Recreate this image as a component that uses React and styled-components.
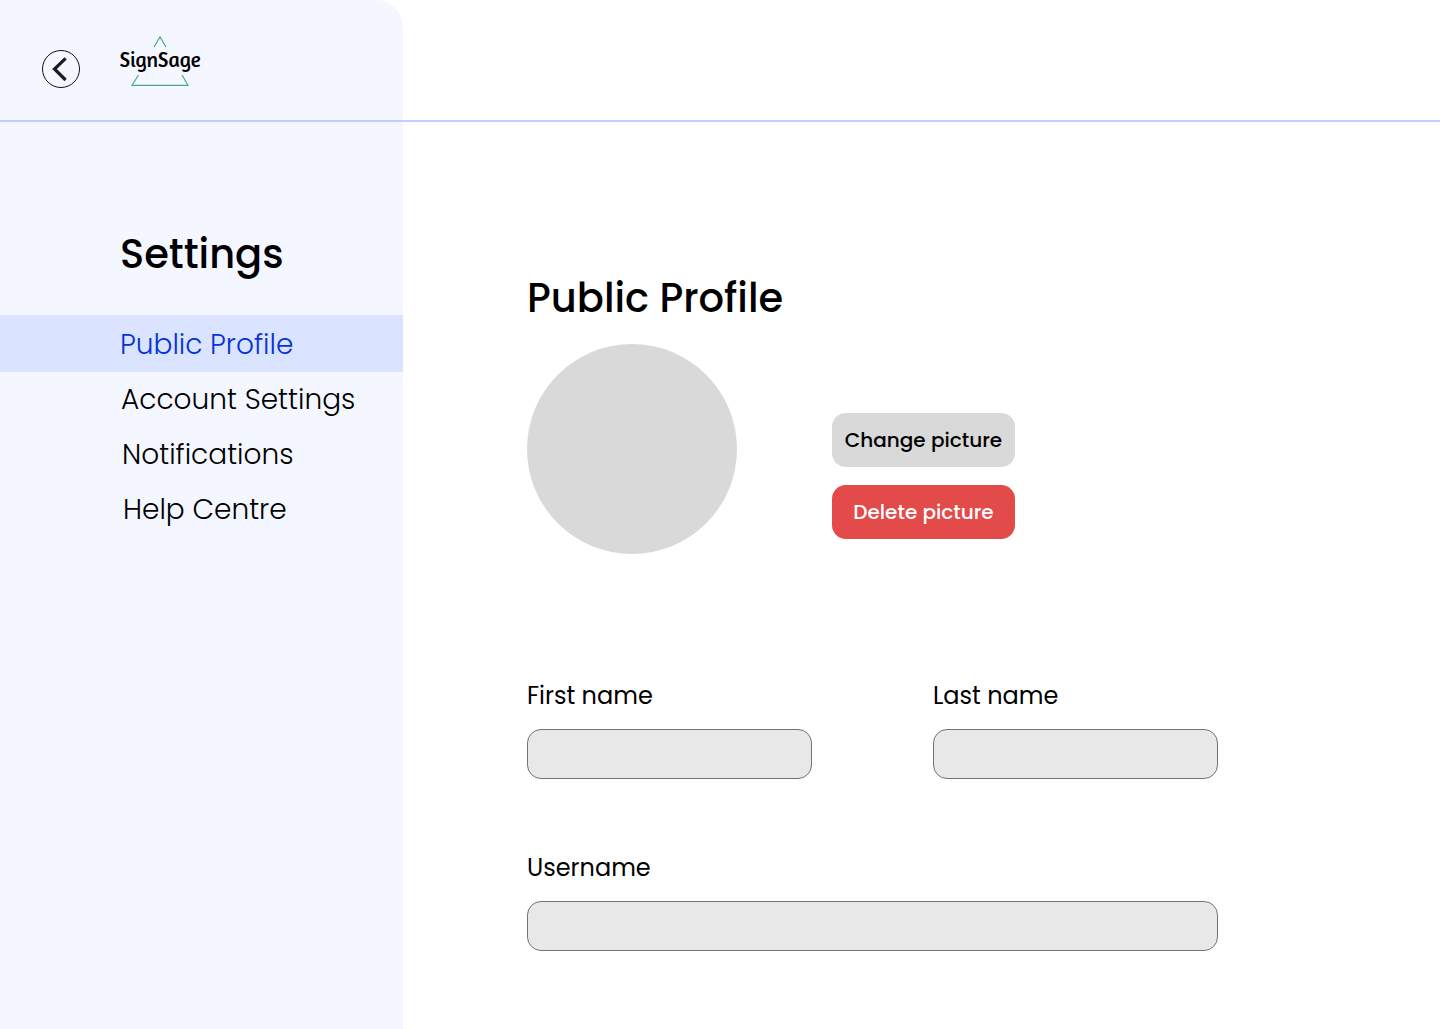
import React from "react";
import styled, { createGlobalStyle } from "styled-components";

const GlobalStyle = createGlobalStyle`
  *, *::before, *::after { box-sizing: border-box; }
  body {
    margin: 0;
    background: #fff;
    color: #000;
    font-family: Poppins, Inter, "Open Sans", sans-serif;
  }
`;

const Page = styled.div`
  display: grid;
  grid-template-columns: 403px 1fr;
  min-height: 1029px;
`;

const Sidebar = styled.aside`
  background: #f4f7ff;
  border-top-right-radius: 27px;
`;

const TopBar = styled.div`
  display: flex;
  align-items: flex-start;
  height: 122px;
  border-bottom: 2px solid #bfcfff;
`;

const BackButton = styled.button`
  display: block;
  width: 38px;
  height: 38px;
  margin: 50px 0 0 42px;
  padding: 0;
  border: 0;
  background: none;
`;

const Logo = styled.svg`
  display: block;
  width: 88px;
  height: 54px;
  margin: 34px 0 0 36px;
  overflow: visible;
`;

const LogoText = styled.text`
  font-family: Amaranth, "Open Sans", sans-serif;
  font-size: 21px;
  font-weight: 400;
`;

const Title = styled.h1`
  margin: ${(p) => p.$margin};
  font-size: 40px;
  line-height: 60px;
  font-weight: 500;
  white-space: nowrap;
`;

const NavItem = styled.a`
  display: block;
  height: ${(p) => (p.$active ? 57 : 55)}px;
  line-height: ${(p) => (p.$active ? 59 : 55)}px;
  padding-left: ${(p) => p.$indent}px;
  background: ${(p) => (p.$active ? "#dae3ff" : "transparent")};
  color: ${(p) => (p.$active ? "#0433d9" : "#000")};
  font-size: 28px;
  font-weight: 300;
  white-space: nowrap;
`;

const Content = styled.section`
  width: 815px;
  padding-left: 124px;
`;

const PictureRow = styled.div`
  display: flex;
  align-items: center;
  gap: 95px;
  margin-top: 16px;
`;

const Avatar = styled.div`
  width: 210px;
  height: 210px;
  border-radius: 50%;
  background: #d9d9d9;
`;

const Actions = styled.div`
  display: grid;
  gap: 18px;
  margin-top: 54px;
  align-self: flex-start;
  padding-top: 15px;
`;

const Button = styled.button`
  width: 183px;
  height: 54px;
  padding: 0;
  border: 0;
  border-radius: 14px;
  background: ${(p) => (p.$danger ? "#e34a4a" : "#d9d9d9")};
  color: ${(p) => (p.$danger ? "#fff" : "#000")};
  font: inherit;
  font-size: 20px;
  font-weight: 500;
  white-space: nowrap;
`;

const Form = styled.form`
  display: grid;
  grid-template-columns: 285px 285px;
  column-gap: 121px;
  row-gap: 71px;
  margin-top: 124px;
`;

const Field = styled.label`
  grid-column: ${(p) => (p.$wide ? "1 / -1" : "auto")};
  display: flex;
  flex-direction: column;
  gap: 16px;
  font-size: 24px;
  line-height: 35px;
`;

const Input = styled.input`
  width: 100%;
  height: 50px;
  padding: 0 14px;
  border: 1px solid #737373;
  border-radius: 14px;
  background: #e8e8e8;
  font: inherit;
`;

export default function App() {
  return (
    <>
      <GlobalStyle />
      <Page>
        <Sidebar>
          <TopBar>
            <BackButton aria-label="Back">
              <svg width="38" height="38" viewBox="0 0 38 38" fill="none">
                <circle cx="19" cy="19" r="18.5" stroke="#111" />
                <path d="M23.6 8.3 12.5 19l11.1 11" stroke="#1c1c1e" strokeWidth="3.2" />
              </svg>
            </BackButton>
            <Logo viewBox="0 0 88 54" fill="none">
              <path d="M38 13 44 3l6 10M22.5 41 16 51.3h56L66 41" stroke="#4da67f" strokeWidth="1.2" />
              <LogoText x="3.5" y="32.6" fill="#000">SignSage</LogoText>
            </Logo>
          </TopBar>
          <Title $margin="102px 0 31px 120px">Settings</Title>
          <nav>
            <NavItem $active $indent={120}>Public Profile</NavItem>
            <NavItem $indent={121}>Account Settings</NavItem>
            <NavItem $indent={122}>Notifications</NavItem>
            <NavItem $indent={123}>Help Centre</NavItem>
          </nav>
        </Sidebar>
        <main>
          <TopBar />
          <Content>
            <Title $margin="146px 0 0 0">Public Profile</Title>
            <PictureRow>
              <Avatar />
              <Actions>
                <Button>Change picture</Button>
                <Button $danger>Delete picture</Button>
              </Actions>
            </PictureRow>
            <Form>
              <Field>First name<Input /></Field>
              <Field>Last name<Input /></Field>
              <Field $wide>Username<Input /></Field>
            </Form>
          </Content>
        </main>
      </Page>
    </>
  );
}
